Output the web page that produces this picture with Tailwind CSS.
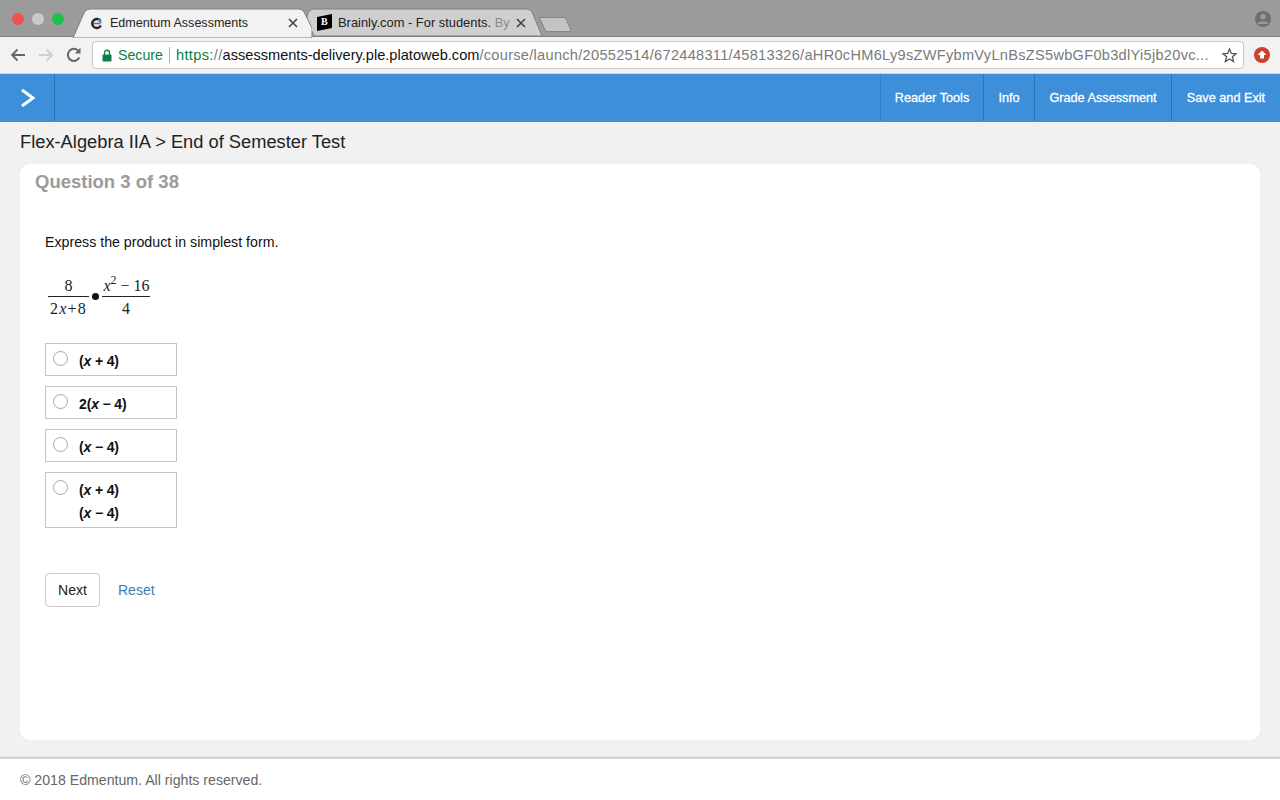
<!DOCTYPE html>
<html lang="en">
<head>
<meta charset="utf-8">
<title>Edmentum Assessments</title>
<script src="https://cdn.jsdelivr.net/npm/@tailwindcss/browser@4"></script>
</head>
<body class="w-[1280px] h-[800px] overflow-hidden bg-[#f1f1f1] font-['Liberation_Sans',Arial,sans-serif] text-[#111]">
<div class="h-[800px] flex flex-col">
  <!-- Tab strip -->
  <div class="h-[37px] bg-[#9b9b9b] flex items-end relative shrink-0 border-b border-[#7f7f7f]">
    <div class="absolute left-[12px] top-[13px] flex gap-[8px]">
      <span class="w-[12px] h-[12px] rounded-full bg-[#f1514f]"></span>
      <span class="w-[12px] h-[12px] rounded-full bg-[#c9c9c9]"></span>
      <span class="w-[12px] h-[12px] rounded-full bg-[#1fc14e]"></span>
    </div>
    <!-- inactive tab -->
    <div class="absolute left-[303px] top-[8px] w-[240px] h-[29px]">
      <svg class="absolute inset-0" width="240" height="29" viewBox="0 0 240 29"><path d="M5 5 Q7 1 11 1 H224 Q227 1 229 4 L239 28 H11 L5 14 Q3 10 5 5Z" fill="#cfcfcf" stroke="#808080"/></svg>
      <svg class="absolute left-[13px] top-[6px]" width="17" height="17" viewBox="0 0 17 17"><path d="M1 3 L16 0 V14 L1 17Z" fill="#000"/></svg>
      <span class="absolute left-[18px] top-[8px] text-[10px] leading-[12px] font-bold font-['Liberation_Serif',serif] text-white">B</span>
      <span class="absolute left-[35px] top-[7px] whitespace-nowrap text-[12.9px] leading-[16px] text-[#222]">Brainly.com - For students. <span class="text-[#8a8a8a]">By</span></span>
      <svg class="absolute left-[213px] top-[10px]" width="10" height="10" viewBox="0 0 10 10"><path d="M1 1 L9 9 M9 1 L1 9" stroke="#444" stroke-width="1.6"/></svg>
    </div>
    <!-- new tab -->
    <svg class="absolute left-[538px] top-[16px]" width="36" height="17" viewBox="0 0 36 17"><path d="M1.5 1.5 H25 Q27 1.5 28 3 L33.5 15.5 H9 Q7.500 15.500 7 14Z" fill="#c4c4c4" stroke="#858585"/></svg>
    <!-- active tab -->
    <div class="absolute left-[70px] top-[8px] w-[242px] h-[30px]">
      <svg class="absolute inset-0" width="242" height="30" viewBox="0 0 242 30"><path d="M3 30 L14 5 Q16 1 20 1 H229 Q232 1 234 4 L242 20 V30Z" fill="#f2f2f2" stroke="#808080"/></svg>
      <svg class="absolute left-[20px] top-[9px]" width="13" height="13" viewBox="0 0 13 13">
        <path d="M10.800 8.500 A4.500 4.500 0 1 1 10.500 4" fill="none" stroke="#222" stroke-width="2.400"/>
        <path d="M3 6.500 H10.500" stroke="#e03b3b" stroke-width="1.600"/>
        <path d="M8 2.800 A4.500 4.500 0 0 1 11 6" fill="none" stroke="#2d9bd7" stroke-width="2"/>
      </svg>
      <span class="absolute left-[40px] top-[7px] text-[12.55px] leading-[16px] text-[#222] whitespace-nowrap">Edmentum Assessments</span>
      <svg class="absolute left-[218px] top-[10px]" width="10" height="10" viewBox="0 0 10 10"><path d="M1 1 L9 9 M9 1 L1 9" stroke="#444" stroke-width="1.600"/></svg>
    </div>
    <!-- profile -->
    <svg class="absolute left-[1255px] top-[11px]" width="16" height="16" viewBox="0 0 16 16"><circle cx="8" cy="8" r="8" fill="#6f6f6f"/><circle cx="8" cy="5.800" r="2.700" fill="#9b9b9b"/><path d="M2.800 12.200 C4 9.500 12 9.500 13.200 12.200 L13.200 13 H2.800Z" fill="#9b9b9b"/></svg>
  </div>
  <!-- Toolbar -->
  <div class="h-[37px] bg-[#f2f2f2] flex items-center shrink-0 border-b border-[#d4d4d4] pl-[8px] pr-[8px]">
    <div class="flex items-center gap-[10px] w-[84px] shrink-0">
      <svg class="ml-[1px]" width="18" height="18" viewBox="0 0 18 18"><path d="M16 9 H3 M8.500 3.500 L3 9 L8.500 14.500" fill="none" stroke="#666" stroke-width="1.800"/></svg>
      <svg width="18" height="18" viewBox="0 0 18 18"><path d="M2 9 H15 M9.500 3.500 L15 9 L9.500 14.500" fill="none" stroke="#cfcfcf" stroke-width="1.800"/></svg>
      <svg width="18" height="18" viewBox="0 0 18 18"><path d="M14.300 11.500 A6 6 0 1 1 13.500 5" fill="none" stroke="#666" stroke-width="2"/><path d="M15.500 1.800 V7.500 H9.800Z" fill="#666"/></svg>
    </div>
    <div class="h-[28px] w-[1152px] bg-white border border-[#c8c8c8] rounded-[4px] flex items-center pl-[9px] pr-[6px] relative">
      <svg class="shrink-0" width="10" height="13" viewBox="0 0 10 13"><path d="M2.500 6 V3.800 A2.500 2.500 0 0 1 7.500 3.800 V6" fill="none" stroke="#0b8043" stroke-width="1.400"/><rect x="0.500" y="5.500" width="9" height="7" rx="1" fill="#0b8043"/></svg>
      <span class="ml-[6px] text-[14.2px] leading-[18px] text-[#0b8043]">Secure</span>
      <span class="mx-[6px] w-px h-[16px] bg-[#b0b0b0]"></span>
      <span class="text-[14.6px] leading-[18px] whitespace-nowrap text-[#7a7a7a]"><span class="text-[#0b8043] tracking-[0.35px]">https:</span><span class="tracking-[0.35px]">//</span><span class="text-[#111]">assessments-delivery.ple.platoweb.com</span><span class="tracking-[0.28px]">/course/launch/20552514/672448311/45813326/aHR0cHM6Ly9sZWFybmVyLnBsZS5wbGF0b3dlYi5jb20vc...</span></span>
      <svg class="absolute right-[5px] top-[5px]" width="17" height="17" viewBox="0 0 17 17"><path d="M8.500 2 L10.300 6.500 L15 6.800 L11.400 9.800 L12.600 14.500 L8.500 11.900 L4.400 14.500 L5.600 9.800 L2 6.800 L6.700 6.500Z" fill="none" stroke="#555" stroke-width="1.300"/></svg>
    </div>
    <svg class="ml-[9px] shrink-0" width="18" height="18" viewBox="0 0 18 18"><circle cx="9" cy="9" r="8" fill="#d0402f"/><path d="M9 4.500 L13.500 9 H11 V12.500 H7 V9 H4.500Z" fill="#fff"/></svg>
  </div>
  <!-- App nav -->
  <nav class="h-[48px] bg-[#3d8fd9] flex items-stretch shrink-0">
    <div class="w-[55px] h-[47px] border-r border-[#2a72bd] flex items-center justify-center pl-px">
      <svg width="16" height="20" viewBox="0 0 16 20"><path d="M2 2 L13 10 L2 18" fill="none" stroke="#fff" stroke-width="3"/></svg>
    </div>
    <div class="flex-1"></div>
    <div class="flex text-white text-[12.7px] font-normal [-webkit-text-stroke:0.3px_white]">
      <a class="w-[103px] h-[47px] pt-[2px] flex items-center justify-center border-l border-[#2f7fcb]">Reader Tools</a>
      <a class="w-[51px] h-[47px] pt-[2px] flex items-center justify-center border-l border-[#2a72bd]">Info</a>
      <a class="w-[137px] h-[47px] pt-[2px] flex items-center justify-center border-l border-[#2a72bd]">Grade Assessment</a>
      <a class="w-[109px] h-[47px] pt-[2px] flex items-center justify-center border-l border-[#2a72bd]">Save and Exit</a>
    </div>
  </nav>
  <!-- Main -->
  <main class="flex-1 min-h-0 flex flex-col px-[20px]">
    <h1 class="h-[42px] pt-[7px] text-[18.3px] leading-[25px] text-[#222] font-normal whitespace-nowrap">Flex-Algebra IIA &gt; End of Semester Test</h1>
    <section class="h-[576px] bg-white rounded-[10px] pl-[25px] pt-[6px]">
      <h2 class="-ml-[10px] text-[18.5px] leading-[24px] font-bold text-[#9a9a9a]">Question 3 of 38</h2>
      <p class="mt-[38px] text-[14.2px] leading-[20px] text-[#111]">Express the product in simplest form.</p>
      <div class="mt-[20px] h-[48px] ml-[3px] flex items-center font-['Liberation_Serif',serif] text-[16px] text-[#222]">
        <div class="w-[41px] flex flex-col items-center">
          <span class="h-[22px] leading-[24px]">8</span>
          <span class="w-full h-px bg-[#222]"></span>
          <span class="h-[22px] leading-[24px] whitespace-nowrap tracking-[1.2px]">2<i>x</i>+8</span>
        </div>
        <span class="w-[7px] h-[7px] mx-[3px] mt-[1px] rounded-full bg-[#111]"></span>
        <div class="w-[48px] flex flex-col items-center">
          <span class="h-[22px] leading-[24px] whitespace-nowrap pl-px"><i>x</i><sup class="text-[12px] leading-none relative -top-[7px]">2</sup> − 16</span>
          <span class="w-full h-px bg-[#222]"></span>
          <span class="h-[22px] leading-[24px]">4</span>
        </div>
      </div>
      <div class="mt-[23px] w-[132px] flex flex-col gap-[10px] text-[14px] tracking-[-0.15px] font-bold text-[#111]">
        <label class="h-[33px] border border-[#c4c4c4] flex items-start pl-[7px] pt-[7px]">
          <span class="w-[15px] h-[15px] rounded-full border border-[#a8a8a8] bg-white shrink-0"></span>
          <span class="ml-[11px] leading-[20px]">(<i>x</i> + 4)</span>
        </label>
        <label class="h-[33px] border border-[#c4c4c4] flex items-start pl-[7px] pt-[7px]">
          <span class="w-[15px] h-[15px] rounded-full border border-[#a8a8a8] bg-white shrink-0"></span>
          <span class="ml-[11px] leading-[20px]">2(<i>x</i> − 4)</span>
        </label>
        <label class="h-[33px] border border-[#c4c4c4] flex items-start pl-[7px] pt-[7px]">
          <span class="w-[15px] h-[15px] rounded-full border border-[#a8a8a8] bg-white shrink-0"></span>
          <span class="ml-[11px] leading-[20px]">(<i>x</i> − 4)</span>
        </label>
        <label class="h-[56px] border border-[#c4c4c4] flex items-start pl-[7px] pt-[7px]">
          <span class="w-[15px] h-[15px] rounded-full border border-[#a8a8a8] bg-white shrink-0"></span>
          <span class="ml-[11px] flex flex-col"><span class="leading-[20px]">(<i>x</i> + 4)</span><span class="mt-[3px] leading-[20px]">(<i>x</i> − 4)</span></span>
        </label>
      </div>
      <div class="mt-[45px] flex items-center text-[14px]">
        <button class="w-[55px] h-[34px] border border-[#ccc] rounded-[4px] bg-white text-[#222]">Next</button>
        <a class="ml-[18px] text-[#3f7cb3]">Reset</a>
      </div>
    </section>
    <div class="h-[18px] shrink-0"></div>
  </main>
  <!-- Footer -->
  <footer class="h-[42px] shrink-0 bg-white border-t border-[#cfcfcf] shadow-[0_-1px_2px_rgba(0,0,0,0.18)] px-[20px] pt-[11px] text-[14.15px] leading-[20px] text-[#666]">© 2018 Edmentum. All rights reserved.</footer>
</div>
</body>
</html>
